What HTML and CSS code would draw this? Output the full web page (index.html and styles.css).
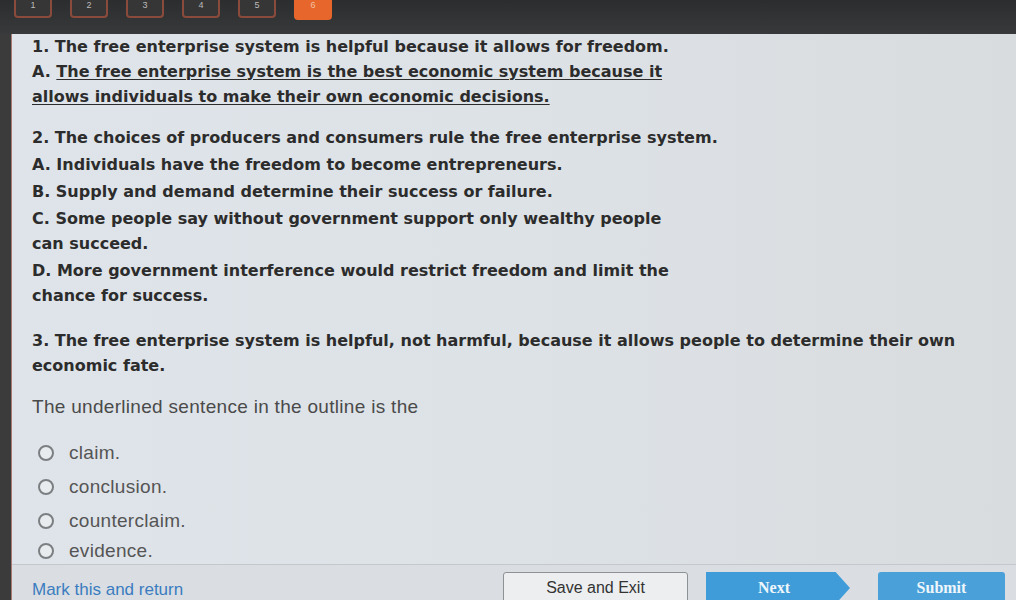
FILE: index.html
```html
<!DOCTYPE html>
<html>
<head>
<meta charset="utf-8">
<link rel="stylesheet" href="styles.css">
</head>
<body>
<div class="app">
  <header class="topbar">
    <div class="tab">1</div>
    <div class="tab">2</div>
    <div class="tab">3</div>
    <div class="tab">4</div>
    <div class="tab">5</div>
    <div class="tab active">6</div>
  </header>
  <div class="frame">
    <div class="edge"></div>
    <div class="page">
      <main class="content">
        <div class="outline">
          <div class="sec">
            <p>1. The free enterprise system is helpful because it allows for freedom.</p>
            <p>A. <u>The free enterprise system is the best economic system because it</u><br><u>allows individuals to make their own economic decisions.</u></p>
          </div>
          <div class="sec sec2">
            <p>2. The choices of producers and consumers rule the free enterprise system.</p>
            <p>A. Individuals have the freedom to become entrepreneurs.</p>
            <p>B. Supply and demand determine their success or failure.</p>
            <p>C. Some people say without government support only wealthy people<br>can succeed.</p>
            <p>D. More government interference would restrict freedom and limit the<br>chance for success.</p>
          </div>
          <div class="sec sec3">
            <p>3. The free enterprise system is helpful, not harmful, because it allows people to determine their own<br>economic fate.</p>
          </div>
        </div>
        <div class="question">The underlined sentence in the outline is the</div>
        <ul class="options">
          <li><span class="radio"></span><span>claim.</span></li>
          <li><span class="radio"></span><span>conclusion.</span></li>
          <li><span class="radio"></span><span>counterclaim.</span></li>
          <li><span class="radio"></span><span>evidence.</span></li>
        </ul>
      </main>
      <footer class="footer">
        <a class="mark">Mark this and return</a>
        <div class="buttons">
          <button class="btn save">Save and Exit</button>
          <button class="btn next">Next</button>
          <button class="btn submit">Submit</button>
        </div>
      </footer>
    </div>
  </div>
</div>
</body>
</html>
```

FILE: styles.css
```css
* { box-sizing: border-box; }
html, body { margin: 0; padding: 0; }
body {
  width: 1016px;
  height: 600px;
  overflow: hidden;
  background: #2f3031;
  font-family: "Liberation Sans", Arial, sans-serif;
}
.app {
  display: flex;
  flex-direction: column;
  height: 600px;
}
.topbar {
  height: 34px;
  flex: none;
  background: linear-gradient(#2c2d2e, #38393a);
  display: flex;
  align-items: flex-start;
  gap: 18px;
  padding-left: 14px;
}
.tab {
  width: 38px;
  height: 18px;
  border: 2px solid #8a4a3c;
  border-top: none;
  border-radius: 0 0 4px 4px;
  background: #363636;
  color: #bbb;
  font-size: 9px;
  text-align: center;
  line-height: 10px;
}
.tab.active {
  background: #e7662c;
  border-color: #e7662c;
  height: 20px;
  color: #f3c0a0;
}
.frame {
  flex: 1;
  display: flex;
  min-height: 0;
}
.edge {
  width: 12px;
  flex: none;
  background: #3b3b3c;
  border-right: 1px solid #a87a72;
}
.page {
  flex: 1;
  display: flex;
  flex-direction: column;
  background: linear-gradient(90deg, #dfe4ea 0%, #dde2e7 50%, #d9dcde 100%);
  min-width: 0;
}
.content {
  height: 530px;
  flex: none;
  overflow: hidden;
  padding-left: 20px;
}
.outline p {
  margin: 0;
  font-family: "DejaVu Sans", Verdana, sans-serif;
  font-weight: bold;
  font-size: 16px;
  line-height: 25px;
  color: #2c2c2c;
  white-space: nowrap;
}
.outline u {
  text-decoration-thickness: 1px;
  text-underline-offset: 2px;
}
.sec2 { margin-top: 16px; display: flex; flex-direction: column; gap: 2px; }
.sec3 { margin-top: 20px; }
.question {
  margin-top: 16px;
  font-size: 19px;
  letter-spacing: 0.3px;
  line-height: 25px;
  color: #4a4a4a;
}
.options {
  list-style: none;
  margin: 17px 0 0 0;
  padding: 0;
}
.options li {
  height: 34px;
  display: flex;
  align-items: center;
  gap: 15px;
  padding-left: 6px;
  font-size: 19px;
  letter-spacing: 0.3px;
  color: #555;
}
.options li:last-child {
  height: 26px;
}
.radio {
  width: 16px;
  height: 16px;
  border: 2px solid #7c7f82;
  border-radius: 50%;
  background: #e8ecef;
  flex: none;
}
.footer {
  flex: 1;
  border-top: 1px solid #c4c8cc;
  background: #dadee2;
  display: flex;
  align-items: flex-start;
  justify-content: space-between;
  padding-left: 20px;
  padding-right: 11px;
  overflow: hidden;
}
.mark {
  margin-top: 15px;
  font-size: 17px;
  line-height: 20px;
  color: #3b7cc0;
}
.buttons {
  display: flex;
  margin-top: 7px;
}
.btn {
  height: 32px;
  font-size: 16px;
  border: none;
  padding: 0;
}
.save {
  width: 185px;
  background: #eceef0;
  border: 1px solid #8e9194;
  border-radius: 3px;
  color: #333;
  font-family: "Liberation Sans", Arial, sans-serif;
}
.next {
  margin-left: 18px;
  width: 144px;
  background: #3f9cd8;
  color: #eef6fb;
  font-weight: bold;
  font-family: "Liberation Serif", serif;
  clip-path: polygon(0 0, 90% 0, 100% 50%, 90% 100%, 0 100%);
  padding-right: 8px;
}
.submit {
  margin-left: 28px;
  width: 127px;
  background: #4aa1d9;
  color: #eef6fb;
  font-weight: bold;
  font-family: "Liberation Serif", serif;
  border-radius: 3px;
}
```
